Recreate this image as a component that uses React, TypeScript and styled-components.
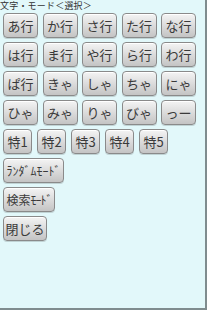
import React from 'react';
import styled, { createGlobalStyle } from 'styled-components';

const GlobalStyle = createGlobalStyle`
  html, body {
    margin: 0;
    padding: 0;
    background: #e2f8fa;
  }
  body {
    font-family: "Noto Sans CJK JP", "Noto Sans", sans-serif;
  }
`;

const Screen = styled.div`
  width: 207px;
  height: 310px;
  box-sizing: border-box;
  background: #e2f8fa;
  border-right: 2px solid #7f8c8e;
  border-bottom: 2px solid #7f8c8e;
  overflow: hidden;
`;

const Title = styled.div`
  height: 11px;
  font-size: 9px;
  line-height: 11px;
  letter-spacing: 0.2px;
  color: #333;
  white-space: nowrap;
`;

const Rows = styled.div`
  display: flex;
  flex-direction: column;
  gap: 4px;
  padding: 2px 0 0 3px;
`;

const Row = styled.div<{ gap: number }>`
  display: flex;
  gap: ${props => props.gap}px;
`;

const Key = styled.button<{ w: number }>`
  width: ${props => props.w}px;
  height: 25px;
  padding: 0;
  box-sizing: border-box;
  border: 1px solid #8a8a8a;
  border-radius: 4px;
  background: linear-gradient(to bottom, #f4f4f4 0%, #dedede 45%, #c4c4c4 100%);
  box-shadow: inset 0 1px 0 #ffffff, 0 1px 0 rgba(0, 0, 0, 0.15);
  font-family: "Noto Sans CJK JP", sans-serif;
  font-size: 13px;
  line-height: 23px;
  color: #3a3a3a;
  text-align: center;
  white-space: nowrap;
  overflow: hidden;
  cursor: pointer;
`;

// half-width katakana labels, squeezed like the device font
const Half = styled.span<{ squeeze: number }>`
  font-size: 12px;
  letter-spacing: ${props => -props.squeeze}px;
`;

const ModeText = styled.span`
  font-size: 12px;
`;

const kana = [
  ['あ行', 'か行', 'さ行', 'た行', 'な行'],
  ['は行', 'ま行', 'や行', 'ら行', 'わ行'],
  ['ぱ行', 'きゃ', 'しゃ', 'ちゃ', 'にゃ'],
  ['ひゃ', 'みゃ', 'りゃ', 'びゃ', 'っー'],
];

const special = ['特1', '特2', '特3', '特4', '特5'];

export default function App() {
  return (
    <Screen>
      <GlobalStyle />
      <Title>文字・モード＜選択＞</Title>
      <Rows>
        {kana.map((row, i) => (
          <Row key={i} gap={4.5}>
            {row.map(label => (
              <Key key={label} w={35}>{label}</Key>
            ))}
          </Row>
        ))}
        <Row gap={5}>
          {special.map(label => (
            <Key key={label} w={29}>{label}</Key>
          ))}
        </Row>
        <Row gap={0}>
          <Key w={61}><Half squeeze={0}>ﾗﾝﾀﾞﾑﾓｰﾄﾞ</Half></Key>
        </Row>
        <Row gap={0}>
          <Key w={52}><ModeText>検索</ModeText><Half squeeze={1}>ﾓｰﾄﾞ</Half></Key>
        </Row>
        <Row gap={0}>
          <Key w={44}>閉じる</Key>
        </Row>
      </Rows>
    </Screen>
  );
}
